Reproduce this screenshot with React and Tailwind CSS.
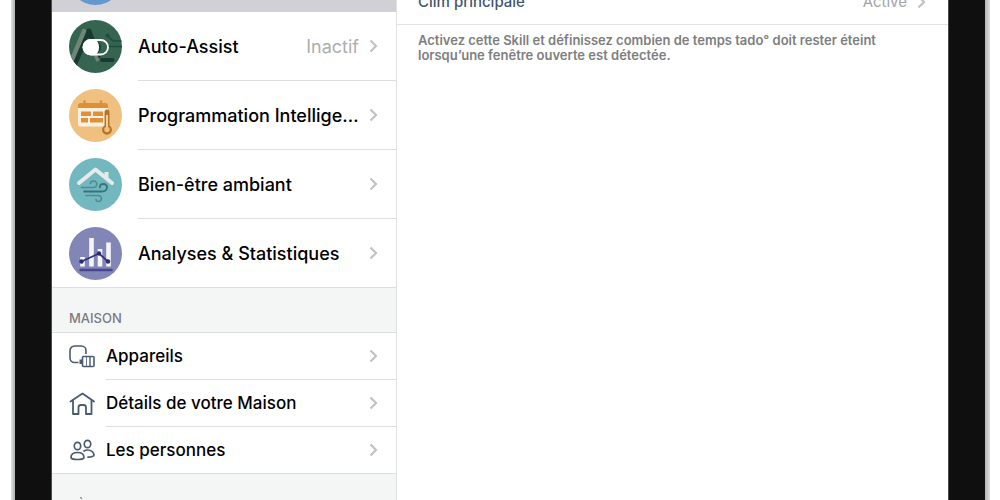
import { clsx } from "clsx";

const Chevron = () => (
  <svg viewBox="0 0 9 14" className="h-3.5 w-[9px] shrink-0 text-[#c2c2c5]" fill="none" stroke="currentColor" strokeWidth="2.2" aria-hidden="true">
    <path d="M1.5 1.5 7 7l-5.500 5.500" />
  </svg>
);

const AssistIcon = () => (
  <svg viewBox="0 0 53 53" className="size-[53px] shrink-0" fill="none" aria-hidden="true">
    <clipPath id="assist-disc">
      <circle cx="26.5" cy="26.5" r="26.5" />
    </clipPath>
    <g clipPath="url(#assist-disc)">
      <rect width="53" height="53" fill="#356550" />
      <path d="M20 11 29 36" stroke="#183a31" strokeWidth="5" strokeLinecap="round" />
      <path d="M20 11 6 44" stroke="#183a31" strokeWidth="4.5" strokeLinecap="round" />
      <path d="M15 11 2 42" stroke="#718478" strokeWidth="4.5" strokeLinecap="round" />
      <path d="m26 34 3 7" stroke="#718478" strokeWidth="3.5" />
      <path d="M33 40h10.5" stroke="#183a31" strokeWidth="4" strokeLinecap="round" />
      <path d="m39 16 5 5h9M39 26.500h14" stroke="#214b3d" strokeWidth="1.7" />
      <circle cx="38.5" cy="15.5" r="2" fill="#214b3d" />
      <rect x="14.5" y="20" width="24.500" height="14.500" rx="7.2" fill="#356550" stroke="#fff" strokeWidth="1.8" />
      <path d="M28 21c5 1.500 5 11 0 12.500Z" fill="#183a31" />
      <path d="M21.500 19.200h3c3 0 5.500 3.500 5.500 8s-2.500 8-5.500 8h-3a8 8 0 0 1 0-16Z" fill="#fff" />
    </g>
  </svg>
);

const ScheduleIcon = () => (
  <svg viewBox="0 0 53 53" className="size-[53px] shrink-0" fill="none" aria-hidden="true">
    <circle cx="26.5" cy="26.5" r="26.5" fill="#efc080" />
    <path d="M9 19v-2.5A2.5 2.5 0 0 1 11.5 14h25a2.500 2.500 0 0 1 2.500 2.500V19Z" fill="#df8f36" />
    <path d="M15.5 12.5v3M32 12.5v3" stroke="#df8f36" strokeWidth="2.6" strokeLinecap="round" />
    <path d="M9 19h30v16a2.500 2.500 0 0 1-2.500 2.500h-25A2.500 2.500 0 0 1 9 35Z" fill="#f8f1e2" />
    <path d="M12 22.500h10v4.500H12zM24 22.500h10v4.500H24zM12 29h7v4.500h-7zM21 29h13v4.500H21z" fill="#df9038" />
    <path d="M35.500 36.500V23a2.500 2.500 0 0 1 5 0v13.500a5 5 0 1 1-5 0Z" fill="#b87427" />
    <path d="M38 26v12" stroke="#f3cf98" strokeWidth="2" />
    <circle cx="38" cy="40.5" r="2.7" fill="#f0c07f" />
  </svg>
);

const ComfortIcon = () => (
  <svg viewBox="0 0 53 53" className="size-[53px] shrink-0" fill="none" strokeLinecap="round" aria-hidden="true">
    <circle cx="26.5" cy="26.5" r="26.5" fill="#73b7bf" />
    <path d="m10 25 16.500-13.500L43 25" stroke="#e3ebeb" strokeWidth="4" strokeLinejoin="round" />
    <path d="M35.500 14h4v8l-4-3Z" fill="#e3ebeb" />
    <path d="M12.500 29.500H24c5 0 5-6.500.5-6.500-2 0-3 1-3 2.500" stroke="#4c8d94" strokeWidth="1.6" />
    <path d="M15 33.500h17.500c7 0 7-7.500 2-7.500-3 0-4 1.500-3.500 3.500" stroke="#35747b" strokeWidth="1.8" />
    <path d="M17 37.500h12c5 0 4 6 .5 6-2 0-2.500-1-2.500-2" stroke="#4c8d94" strokeWidth="1.6" />
  </svg>
);

const StatsIcon = () => (
  <svg viewBox="0 0 53 53" className="size-[53px] shrink-0" fill="none" aria-hidden="true">
    <circle cx="26.5" cy="26.5" r="26.5" fill="#8186b6" />
    <path d="M13.500 30v9.500M22.500 11v28.500M31 22v17.500M39.500 15.500v24" stroke="#f5f5f5" strokeWidth="4.6" />
    <path d="M10.500 43h33" stroke="#494392" strokeWidth="2.5" />
    <path d="m12.500 34.500 17.500-8 9 8" stroke="#37317a" strokeWidth="1.7" />
    <g fill="#302a71">
      <circle cx="12.5" cy="34.5" r="2.2" />
      <circle cx="30" cy="26.5" r="2.2" />
      <circle cx="39" cy="34.5" r="2.2" />
    </g>
  </svg>
);

const lineIcon = "size-[26px] shrink-0 text-[#4a5b70]";

const DevicesIcon = () => (
  <svg viewBox="0 0 26 26" className={lineIcon} fill="none" stroke="currentColor" strokeWidth="1.6" aria-hidden="true">
    <path d="M9.500 18.500h-4A4.500 4.500 0 0 1 1 14V6.500A4.500 4.500 0 0 1 5.500 2H12.500A4.500 4.500 0 0 1 17 6.500V10" />
    <rect x="13.5" y="12.500" width="11.500" height="10" rx="1" />
    <path d="M21 12.500v10" strokeWidth="1.4" />
    <path d="M17.500 12.500v10" strokeWidth="0.8" />
    <path d="M10.500 15.500h2.500v4.500h-2.500Z" fill="currentColor" stroke="none" />
  </svg>
);

const HomeIcon = () => (
  <svg viewBox="0 0 26 26" className={lineIcon} fill="none" stroke="currentColor" strokeWidth="1.8" strokeLinejoin="round" strokeLinecap="round" aria-hidden="true">
    <path d="m1.500 10.500 12-8 11.500 8" />
    <path d="M4 9.500V23h5.500v-6.500a2.500 2.500 0 0 1 2.500-2.500h2.500a2.500 2.500 0 0 1 2.500 2.500V23h5.500V9.500" />
  </svg>
);

const PeopleIcon = () => (
  <svg viewBox="0 0 26 26" className={lineIcon} fill="none" stroke="currentColor" strokeWidth="1.7" strokeLinecap="round" aria-hidden="true">
    <ellipse cx="8.5" cy="9" rx="3.2" ry="3.7" />
    <ellipse cx="18.5" cy="7" rx="3.2" ry="3.7" />
    <path d="M2 20.500c0-3 2.500-5 6.500-5s6.500 2 6.500 5c0 1-2.500 2-6.500 2s-6.500-1-6.500-2Z" />
    <path d="M15 14c1-.7 2-1 3.500-1 4 0 6.500 2.500 6.500 5 0 1.200-2.500 2-6 2.200" />
  </svg>
);

const skills = [
  { label: "Auto-Assist", status: "Inactif", icon: AssistIcon },
  { label: "Programmation Intelligente", icon: ScheduleIcon },
  { label: "Bien-être ambiant", icon: ComfortIcon },
  { label: "Analyses & Statistiques", icon: StatsIcon },
];

const home = [
  { label: "Appareils", icon: DevicesIcon },
  { label: "Détails de votre Maison", icon: HomeIcon },
  { label: "Les personnes", icon: PeopleIcon },
];

const MenuRow = ({ label, status, icon: Icon, large, last }) => (
  <li>
    <button
      type="button"
      className={clsx(
        "flex w-full items-center pl-[17px] text-left",
        large ? "h-[69px] gap-4 text-lg" : "h-[47px] gap-[11px] text-[17px]",
        last && "border-b border-[#dcdddd]"
      )}
    >
      <Icon />
      <span className={clsx("flex h-full min-w-0 flex-1 items-center gap-2.5 pr-[18px]", !last && "border-b border-[#dedee0]")}>
        <span className="min-w-0 flex-1 truncate pt-0.5 font-medium text-black">{label}</span>
        {status && <span className="pt-0.5 text-[#adadad]">{status}</span>}
        <Chevron />
      </span>
    </button>
  </li>
);

const Sidebar = () => (
  <nav className="w-[345px] shrink-0 border-r border-[#dfe0e2] bg-white">
    <div className="flex h-3 items-end overflow-hidden bg-[#d1d0d6] pb-[7px] pl-[17px]">
      <span className="size-[53px] shrink-0 rounded-full bg-[#6399cd]" />
    </div>
    <ul>
      {skills.map((item, i) => (
        <MenuRow key={item.label} {...item} large last={i === skills.length - 1} />
      ))}
    </ul>
    <h2 className="flex h-[45px] items-end border-b border-[#dcdddd] bg-[#f4f6f5] pb-1 pl-[17px] text-[13px] leading-5 font-medium text-[#7b7c7e]">
      MAISON
    </h2>
    <ul>
      {home.map((item, i) => (
        <MenuRow key={item.label} {...item} last={i === home.length - 1} />
      ))}
    </ul>
    <div className="h-[26px] overflow-hidden bg-[#f4f6f5] pt-[21px] pl-[17px]">
      <h2 className="text-[13px] leading-5 font-medium text-[#7b7c7e]">RÈGLES</h2>
    </div>
  </nav>
);

const Detail = () => (
  <section className="min-w-0 flex-1 bg-white">
    <button
      type="button"
      className="flex h-[25px] w-full items-end overflow-hidden border-b border-[#e3e4e6] pr-[22px] pb-2.5 pl-[21px] text-[15px] leading-6"
    >
      <span className="flex-1 text-left font-medium text-[#42566c]">Clim principale</span>
      <span className="mr-2.5 text-[#a3a3a5]">Activé</span>
      <span className="flex h-6 items-center">
        <Chevron />
      </span>
    </button>
    <p className="max-w-[520px] px-[21px] pt-2 text-[13px] leading-[15px] font-semibold text-[#7d7e80]">
      Activez cette Skill et définissez combien de temps tado° doit rester éteint lorsqu’une fenêtre ouverte est détectée.
    </p>
  </section>
);

export default function App() {
  return (
    <div className="flex h-screen overflow-hidden bg-white pr-2.5 pl-[11px] font-['Inter','Liberation_Sans',sans-serif]">
      <div className="w-1 shrink-0 bg-gradient-to-r from-[#dfe1e0] to-[#aeb2b2]" />
      <div className="flex min-w-0 flex-1 bg-[#0f0f0f] px-9">
        <main className="flex min-w-0 flex-1 border-x border-[#4b4e50]">
          <Sidebar />
          <Detail />
        </main>
      </div>
      <div className="w-[5px] shrink-0 bg-gradient-to-r from-[#b5b5b5] to-[#dededf]" />
    </div>
  );
}
